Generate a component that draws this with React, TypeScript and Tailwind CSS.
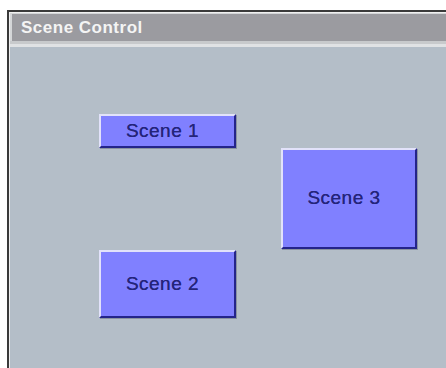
const FONT = { fontFamily: '"Liberation Sans", Arial, sans-serif' };

function SceneButton({ label, className }: { label: string; className: string }) {
  return (
    <button
      className={`flex items-center justify-center border-2 border-t-[#e2e2fa] border-l-[#e2e2fa] border-b-[#24248a] border-r-[#24248a] bg-[#8080ff] pr-[10px] text-[19px] tracking-[0.5px] text-[#24247a] shadow-[1px_1px_0_#8a92a0] [text-shadow:0_0_0.6px_#24247a] ${className}`}
    >
      {label}
    </button>
  );
}

export default function App() {
  return (
    <div className="h-[368px] w-[446px] overflow-hidden bg-white pl-[7px] pt-[10px]" style={FONT}>
      <div className="h-full border-l-2 border-t-2 border-[#3a3a3a]">
        <div className="flex h-full flex-col border-l border-t border-[#f0f0f0] bg-[#d4d6d8]">
          <div className="ml-[2px] mt-[1px] flex h-[27px] items-center bg-[#9b9ba0] pl-[9px] text-[17px] font-bold tracking-[0.5px] text-[#f4f4f4]">
            Scene Control
          </div>
          <div className="h-[3px] bg-[#c8cacc]" />
          <div className="h-[3px] bg-[#e0e2e4]" />
          <div className="flex flex-1 bg-[#b4bec8] pl-[89px] pt-[67px]">
            <div className="flex w-[137px] flex-col gap-[102px]">
              <SceneButton label="Scene 1" className="h-[34px] w-[137px]" />
              <SceneButton label="Scene 2" className="h-[68px] w-[137px]" />
            </div>
            <div className="ml-[45px] pt-[34px]">
              <SceneButton label="Scene 3" className="h-[101px] w-[136px]" />
            </div>
          </div>
        </div>
      </div>
    </div>
  );
}
